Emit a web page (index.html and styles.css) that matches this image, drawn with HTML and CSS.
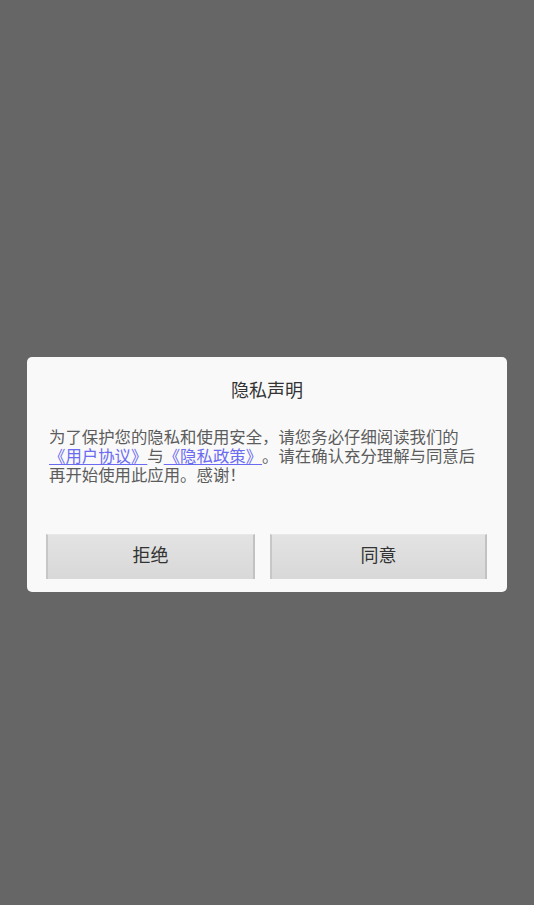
FILE: index.html
```html
<!DOCTYPE html>
<html lang="zh">
<head>
<meta charset="utf-8">
<title>隐私声明</title>
<link rel="stylesheet" href="styles.css">
</head>
<body>
<div class="screen">
  <div class="dialog">
    <div class="title">隐私声明</div>
    <div class="content">为了保护您的隐私和使用安全，请您务必仔细阅读我们的<a class="link" href="#">《用户协议》</a>与<a class="link" href="#">《隐私政策》</a>。请在确认充分理解与同意后再开始使用此应用。感谢！</div>
    <div class="actions">
      <button class="btn btn-left">拒绝</button>
      <button class="btn btn-right">同意</button>
    </div>
  </div>
</div>
</body>
</html>
```
FILE: styles.css
```css
html, body {
  margin: 0;
  padding: 0;
}
body {
  background: #666666;
  font-family: "Noto Sans CJK SC", "Noto Sans", sans-serif;
}
.screen {
  width: 534px;
  height: 905px;
  padding-top: 357px;
  box-sizing: border-box;
}
.dialog {
  width: 480px;
  height: 235px;
  margin-left: 27px;
  background: #f9f9f9;
  border-radius: 5px;
  box-sizing: border-box;
  padding: 19px 20px 13px 19px;
  display: flex;
  flex-direction: column;
}
.title {
  text-align: center;
  font-size: 18px;
  line-height: 26px;
  color: #333333;
  margin-left: 1px;
}
.content {
  margin-top: 25px;
  margin-left: 3px;
  width: 436px;
  font-size: 16.4px;
  line-height: 19px;
  color: #5c5c5c;
  text-spacing-trim: space-all;
  font-kerning: none;
}
.link {
  color: #6b6bf2;
  text-decoration: underline;
  text-underline-offset: 2px;
}
.actions {
  margin-top: auto;
  display: flex;
  gap: 15px;
}
.btn {
  height: 45px;
  font-family: inherit;
  font-size: 18px;
  color: #333333;
  background: linear-gradient(#e3e3e3, #d8d8d8);
  border: none;
  border-top: 1px solid #e8e8e8;
  border-left: 2px solid #c6c6c6;
  border-right: 2px solid #c2c2c2;
  padding: 0 0 6px 0;
  margin: 0;
  border-radius: 0;
  box-sizing: border-box;
}
.btn-left {
  width: 209px;
}
.btn-right {
  width: 217px;
}
```
